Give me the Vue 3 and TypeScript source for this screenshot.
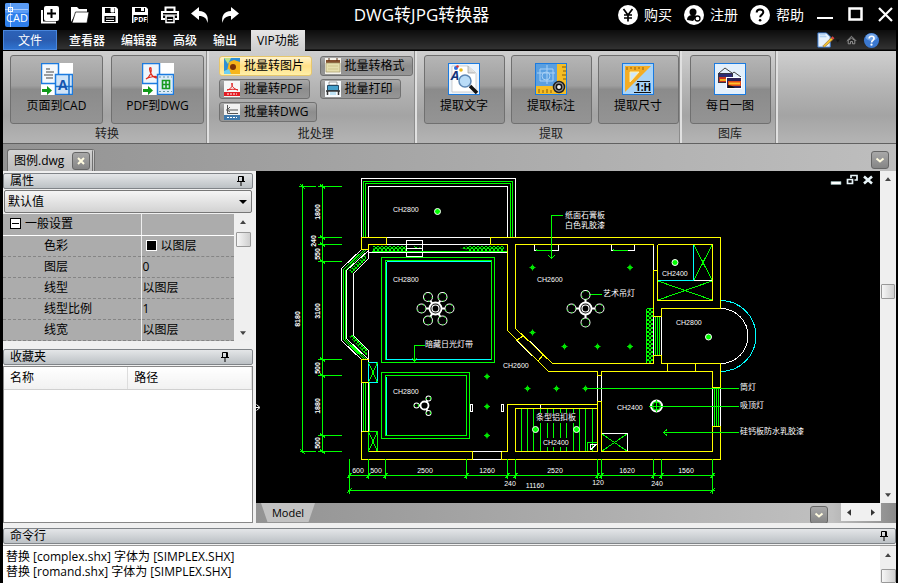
<script setup lang="ts">
import { ref } from 'vue'

type Pt = [number, number]

const tabs = ['查看器', '编辑器', '高级', '输出', 'VIP功能']
const activeTab = ref('VIP功能')
const preset = ref('默认值')

const properties = [
  { name: '色彩', value: '以图层', swatch: true },
  { name: '图层', value: '0', swatch: false },
  { name: '线型', value: '以图层', swatch: false },
  { name: '线型比例', value: '1', swatch: false },
  { name: '线宽', value: '以图层', swatch: false },
]

const log = ['替换 [complex.shx] 字体为 [SIMPLEX.SHX]', '替换 [romand.shx] 字体为 [SIMPLEX.SHX]']

/* Floor plan */
const yellow = [
  'M361.5 249.5V237.5H386.5V244.5H368.5V249.5Z',
  'M490.5 244.5V237.5H720.5V308.5H661.5V316.5H653.5V270.5H657.5V300.5H712.5V244.5H657.5',
  'M657.5 270.5V244.5M653.5 244.5V246M490.5 244.5H507.5V330.5L548.5 371.5H597.5V375.5H601.5V371.5H712.5V387.5H720.5V363.5H661.5V355.5H653.5V363.5H552.5L515.5 328.5V244.5H653.5',
  'M523.5 335.5L516.5 340.5M543.5 354.5L537.5 361.5',
  'M361.5 382.5V359.5H368.5M361.5 382.5H368.5M361.5 431.5V459.5H472.5V451.5H368.5M361.5 431.5H368.5',
  'M501.5 451.5V459.5H720.5V426.5H712.5V451.5H601.5V401.5H597.5V404.5H507.5V451.5H501.5',
  'M515.5 408.5H597.5V451.5H515.5ZM597.5 401.5V408.5M667.5 363.5V371.5M695.5 363.5V371.5',
]
const white = [
  'M361.5 237.5V178.5H515.5V237.5M368.5 237.5V186.5H507.5V237.5',
  'M386.5 237.5H490.5M386.5 244.5H490.5M368.5 252.5H507.5',
  'M406.5 240.5H422.5V256.5H406.5ZM406.5 248.5H422.5',
  'M361.5 249.5L341.5 268.5V340.5L361.5 359.5M368.5 250.5L346.5 270.5V338.5L368.5 359.5',
  'M368.5 249.5V258.5L353.5 273.5V335.5L368.5 350.5V361.5',
  'M524.5 336.5L543.5 354.5M517.5 341.5L537.5 360.5',
  'M534.5 244.5V250.5H558.5V244.5M611.5 244.5V250.5H634.5V244.5',
  'M653.5 246V270.5M657.5 246V270.5M693.5 280.5H712.5',
  'M361.5 382.5V431.5M368.5 382.5V431.5M472.5 451.5H501.5M472.5 459.5H501.5',
  'M516.5 404.5H540.5M516.5 408.5H540.5V404.5M597.5 375.5V401.5M601.5 375.5V401.5',
  'M667.5 363.5H695.5M667.5 371.5H695.5M712.5 387.5V426.5M720.5 387.5V426.5',
  'M470.5 404.5H472.5V411.5H470.5ZM501.5 404.5H503.5V411.5H501.5Z',
  'M601.5 433.5H627.5V451.5M661.5 316.5V355.5M653.5 316.5V355.5',
]
const green = [
  'M363.5 237.5V181.5H512.5V237.5M365.5 237.5V183.5H510.5V237.5',
  'M364.5 249.5L343.5 269.5V339.5L364.5 359.5M366.5 249.5L345.5 270.5V339.5L366.5 359.5',
  'M372 251.5H507M381.5 257.5H494.5V362.5H381.5ZM385.5 260.5H491.5V359.5H385.5Z',
  'M381.5 372.5H469.5V438.5H381.5ZM385.5 375.5H466.5V435.5H385.5Z',
  'M363.5 382.5V431.5M365.5 382.5V431.5M369.5 382.5V431.5',
  'M368.5 431.5H377.5V451.5H368.5ZM368.5 431.5L377.5 451.5M377.5 431.5L368.5 451.5M368.5 362.5L377.5 382.5M377.5 362.5L368.5 382.5',
  'M694 245L712 280M712 245L694 280M658 281L712 300M712 281L658 300',
  'M655.5 316.5V355.5M657.5 316.5V355.5M659.5 316.5V355.5M646.5 308.5H653.5M646.5 308.5V363.5H653.5',
  'M714.5 387.5V426.5M716.5 387.5V426.5M718.5 387.5V426.5M536.5 248.5V250.5H552M613.5 248.5V250.5H628',
  'M602 434L627 451M627 434L602 451M587.5 451.5V442.5H597',
]
const leaders = [
  'M562.5 215.5H551.5V258.5M548.5 255.5L551.5 258.5L554.5 255.5',
  'M585 294.5H602M425 345.5H414.5V361.5M412.5 358.5L414.5 361.5L416.5 358.5',
  'M585 388.5H739M650 406.5H739M663.5 432.5H739M667 429.5L663.5 432.5L667 435.5',
]
const slats = [521.5, 527.5, 533.5, 540.5, 547.5, 553.5, 560.5, 566.5, 573.5, 579.5, 585.5, 592.5]
const xTicks = [349.5, 368.5, 385.5, 466.5, 507.5, 515.5, 597.5, 601.5, 653.5, 661.5, 712.5]
const yTicks = [186.5, 237.5, 244.5, 261.5, 359.5, 375.5, 435.5, 451.5]

const spots: Pt[] = [
  [532.5, 267.5], [630, 267.5], [532.5, 332.5], [564.5, 346.5], [597.5, 346.5], [630, 346.5],
  [527.5, 388.5], [556.5, 388.5], [585.5, 388.5], [487, 376.5], [487, 406.5], [487, 435.5],
]
const lamps: Pt[] = [[437.5, 211.5], [675, 262.5], [708.5, 337], [535.5, 429.5], [576.5, 429.5]]

const chandeliers: { c: Pt; r: number; bulbs: Pt[]; b: number }[] = [
  { c: [435.5, 308.5], r: 6, b: 4, bulbs: [[428, 297], [442.5, 297], [421.5, 308.5], [449.5, 308.5], [428, 320.5], [442.5, 320.5]] },
  { c: [585.5, 308.5], r: 6, b: 4, bulbs: [[585.5, 295], [571.5, 308.5], [599.5, 308.5], [585.5, 322.5]] },
  { c: [424.5, 405.5], r: 4, b: 2, bulbs: [[416.5, 405.5], [428.5, 398.5], [428.5, 413]] },
]

const rooms: { x: number; y: number; t: string }[] = [
  { x: 393, y: 212, t: 'CH2800' },
  { x: 393, y: 282, t: 'CH2800' },
  { x: 537, y: 282, t: 'CH2600' },
  { x: 662, y: 276, t: 'CH2400' },
  { x: 676, y: 325, t: 'CH2800' },
  { x: 393, y: 394, t: 'CH2800' },
  { x: 503, y: 368, t: 'CH2600' },
  { x: 617, y: 410, t: 'CH2400' },
  { x: 543, y: 445, t: 'CH2400' },
]
const notes: { x: number; y: number; lines: string[] }[] = [
  { x: 565, y: 218, lines: ['纸面石膏板', '白色乳胶漆'] },
  { x: 603, y: 296, lines: ['艺术吊灯'] },
  { x: 425, y: 347, lines: ['暗藏日光灯带'] },
  { x: 740, y: 390, lines: ['筒灯'] },
  { x: 740, y: 408, lines: ['吸顶灯'] },
  { x: 740, y: 434, lines: ['硅钙板防水乳胶漆'] },
  { x: 536, y: 420, lines: ['条型铝扣板'] },
]
const xDims: { x: number; y: number; t: string }[] = [
  { x: 358, y: 473, t: '600' },
  { x: 376, y: 473, t: '500' },
  { x: 425, y: 473, t: '2500' },
  { x: 487, y: 473, t: '1260' },
  { x: 555, y: 473, t: '2520' },
  { x: 627, y: 473, t: '1620' },
  { x: 686, y: 473, t: '1560' },
  { x: 510, y: 486, t: '240' },
  { x: 598, y: 485, t: '120' },
  { x: 657, y: 486, t: '240' },
  { x: 535, y: 488, t: '11160' },
]
const yDims: { x: number; y: number; t: string }[] = [
  { x: 320, y: 212, t: '1800' },
  { x: 316, y: 241, t: '240' },
  { x: 320, y: 254, t: '550' },
  { x: 320, y: 311, t: '3100' },
  { x: 300, y: 319, t: '8180' },
  { x: 320, y: 368, t: '500' },
  { x: 320, y: 406, t: '1880' },
  { x: 320, y: 443, t: '500' },
]
</script>

<template>
  <div class="app">
    <header class="titlebar">
      <svg class="logo" viewBox="0 0 24 24">
        <rect width="24" height="24" rx="2" fill="#2f7fec" />
        <rect width="24" height="10" rx="2" fill="#5a9cf5" />
        <path d="M0 6.500H23M5.500 0V24" stroke="#a9ccff" />
        <rect x="3.500" y="4.500" width="4" height="4" fill="none" stroke="#fff" />
        <text x="12" y="19" text-anchor="middle" font-size="11" fill="#fff">CAD</text>
      </svg>
      <nav class="quick">
        <button aria-label="新建">
          <svg viewBox="0 0 18 18"><path d="M1 4v12.500h14" fill="none" stroke="#fff" stroke-width="2" /><rect x="3" y="0" width="15" height="15" rx="2" fill="#fff" /><path d="M10.500 3v9M6 7.500h9" stroke="#000" stroke-width="2" /></svg>
        </button>
        <button aria-label="打开">
          <svg viewBox="0 0 18 18"><path d="M0 16V1h6l2 2h8v4H5z" fill="#fff" /><path d="M4.500 6H18l-2 11H1z" fill="#fff" stroke="#000" stroke-width=".7" /></svg>
        </button>
        <button aria-label="保存">
          <svg viewBox="0 0 18 18"><path d="M1 1h14l2 2v14H1z" fill="#fff" /><path d="M4 2h10v5H4zM3.500 10h11v6h-11z" fill="#000" /><path d="M10 2h3v4h-3zM5 12h8M5 14.500h8" fill="#fff" stroke="#fff" /></svg>
        </button>
        <button aria-label="保存为PDF">
          <svg viewBox="0 0 18 18"><path d="M1 1h14l2 2v14H1z" fill="#fff" /><path d="M4 2h10v4H4zM2.500 9h14v8h-14z" fill="#000" /><path d="M10 2h3v3h-3z" fill="#fff" /><text x="9.500" y="16" text-anchor="middle" font-size="7" font-weight="700" fill="#fff">PDF</text></svg>
        </button>
        <button aria-label="打印">
          <svg viewBox="0 0 18 18"><path d="M4.500 6V1.500h9V6M4 13H1V6h16v7h-3" fill="none" stroke="#fff" stroke-width="2" /><path d="M2 9h14" stroke="#fff" /><path d="M5 10h8v6.500H5z" fill="#000" stroke="#fff" stroke-width="1.500" /><path d="M6.500 13.500h5" stroke="#fff" /></svg>
        </button>
        <button aria-label="撤销">
          <svg viewBox="0 0 18 18"><path d="M0 7.500L8 1v4c7 0 10 5 8.500 12-1-5-3.500-7-8.500-7v4z" fill="#fff" /></svg>
        </button>
        <button aria-label="重做">
          <svg viewBox="0 0 18 18"><path d="M18 7.500L10 1v4C3 5 0 10 1.500 17c1-5 3.500-7 8.500-7v4z" fill="#fff" /></svg>
        </button>
      </nav>
      <h1 class="title">DWG转JPG转换器</h1>
      <nav class="account">
        <button>
          <svg viewBox="0 0 20 20"><circle cx="10" cy="10" r="10" fill="#fff" /><path d="M5.500 4l4.500 6 4.500-6M10 10v6.500M6 10h8M6 13h8" fill="none" stroke="#000" stroke-width="1.700" /></svg>购买
        </button>
        <button>
          <svg viewBox="0 0 20 20"><circle cx="10" cy="10" r="10" fill="#fff" /><circle cx="9" cy="7" r="3.500" fill="#000" /><path d="M3 15c0-4 3-5 6-5 2 0 3 .5 4 1.500L9 16z" fill="#000" /><circle cx="13.500" cy="13.500" r="2.500" fill="#fff" stroke="#000" stroke-width="1.300" /></svg>注册
        </button>
        <button>
          <svg viewBox="0 0 20 20"><circle cx="10" cy="10" r="10" fill="#fff" /><path d="M6.700 7.500C6.700 3.500 13.300 3.500 13.300 7.300c0 2.200-3.200 2.500-3.200 5" fill="none" stroke="#000" stroke-width="2" /><circle cx="10.100" cy="15.200" r="1.300" /></svg>帮助
        </button>
      </nav>
      <div class="window-buttons">
        <button aria-label="最小化"><svg viewBox="0 0 16 16"><path d="M0 11h16" stroke="#fff" stroke-width="2" /></svg></button>
        <button aria-label="最大化"><svg viewBox="0 0 16 16"><rect x="2.500" y="1.500" width="12" height="11" fill="none" stroke="#fff" stroke-width="2.500" /></svg></button>
        <button aria-label="关闭"><svg viewBox="0 0 16 16"><path d="M2 1l13 13M15 1L2 14" stroke="#fff" stroke-width="2.200" /></svg></button>
      </div>
    </header>

    <nav class="tabs">
      <button class="file">文件</button>
      <button v-for="t in tabs" :key="t" class="tab" :class="{ active: t === activeTab }" @click="activeTab = t">{{ t }}</button>
      <div class="tab-tools">
        <button aria-label="样式">
          <svg viewBox="0 0 24 18"><path d="M1 1h9l4 4v11H1z" fill="#e8f2fc" stroke="#3e7fd8" /><path d="M3 3h6M3 5h7" stroke="#9cc5f0" /><path d="M6 15l9-9 2 2-9 8z" fill="#f1c232" stroke="#8a5a20" stroke-width=".6" /><path d="M15 6l1.500-1.500 2 2L17 8z" fill="#d44" /><path d="M20 8h4l-2 3z" fill="#111" /></svg>
        </button>
        <button aria-label="折叠">
          <svg viewBox="0 0 18 18"><path d="M4 9.500l5-5 5 5M5.500 12.500V9L9 6.500 12.500 9v3.500H10V10H8v2.500z" fill="none" stroke="#9a9a9a" /></svg>
        </button>
        <button aria-label="帮助">
          <svg viewBox="0 0 18 18"><circle cx="9" cy="9" r="8" fill="#3b78d0" /><ellipse cx="9" cy="5.500" rx="6" ry="4" fill="#6fa2e6" /><path d="M6.500 7C6.500 3.700 11.700 3.700 11.700 7c0 1.700-2.600 2-2.600 4" fill="none" stroke="#fff" stroke-width="1.800" /><circle cx="9" cy="13.400" r="1.200" fill="#fff" /></svg>
        </button>
      </div>
    </nav>

    <section class="ribbon">
      <div class="group">
        <div class="big-row">
          <button class="big wide">
            <svg viewBox="0 0 32 32"><rect width="32" height="32" fill="#fff" /><rect x=".5" y=".5" width="17" height="20" fill="#f4f8fc" stroke="#1b7be0" stroke-width="1.500" /><path d="M5 6h4M5 9h8M3 12h9M5 15h7" stroke="#444" /><rect x="14.500" y="11.500" width="17" height="20" fill="#cfe4f8" stroke="#1b7be0" stroke-width="1.500" /><path d="M14.500 23.500H32M28 12v20" stroke="#1b6fc8" stroke-width="1.500" /><text x="17" y="27" font-size="14" font-weight="700" fill="#1355b0">A</text><path d="M1 26h5v-3l5 4.500L6 32v-3H1z" fill="#0f9a18" /></svg>
            页面到CAD
          </button>
          <button class="big wide">
            <svg viewBox="0 0 32 32"><rect width="32" height="32" fill="#fff" /><rect x=".5" y=".5" width="17" height="20" fill="#eef5fb" stroke="#1b7be0" stroke-width="1.500" /><path d="M4 16c4-2 6-7 5-11-1-1-2 0-1 3 1 4 3 6 6 7 2 0 1-2-2-1.500C9 14 6 14.500 4 16z" fill="none" stroke="#e02818" stroke-width="1.200" /><rect x="15.500" y="11.500" width="16" height="20" fill="#dcecfa" stroke="#1b7be0" stroke-width="1.500" /><path d="M20.500 17.500h7v8h-7zM24 17.500v8M20.500 21.500h7" fill="none" stroke="#169a20" stroke-width="1.600" /><path d="M17 14h13M17 28.500h13" stroke="#69a" stroke-dasharray="2 2" /><path d="M1 26h5v-3l5 4.500L6 32v-3H1z" fill="#0f9a18" /></svg>
            PDF到DWG
          </button>
        </div>
        <div class="caption">转换</div>
      </div>

      <div class="group batch">
        <div class="small-cols">
          <div class="small-col">
            <button class="small hot">
              <svg viewBox="0 0 16 16"><rect width="16" height="16" fill="#2f8fd4" /><path d="M0 0h7L4 6z" fill="#b8e08a" /><path d="M3 13l2-9 5-2 6 2v12H5z" fill="#f6b51c" /><circle cx="9" cy="9" r="3" fill="#7a3208" /><path d="M0 13l5-2 2 5H0z" fill="#6fd0f0" /></svg>批量转图片
            </button>
            <button class="small">
              <svg viewBox="0 0 16 16"><rect width="16" height="16" fill="#f6f6f6" /><path d="M3 9c4-1 6-4 5-7-1 3 2 6 6 7-3-1-7-1-11 0z" fill="none" stroke="#e02020" /><path d="M0 11h16v4H0z" fill="#e41b23" /><path d="M3 13h10" stroke="#fff" stroke-dasharray="2 1" /></svg>批量转PDF
            </button>
            <button class="small">
              <svg viewBox="0 0 16 16"><rect width="16" height="16" fill="#f2f2f2" /><path d="M3.500 1v8.500H14M2 6h12M6 3l-3 3 3 2" fill="none" stroke="#555" /><path d="M0 11h16v5H0z" fill="#3e78ab" /><path d="M3 13.500h10" stroke="#fff" stroke-dasharray="2 1" /></svg>批量转DWG
            </button>
          </div>
          <div class="small-col">
            <button class="small">
              <svg viewBox="0 0 16 16"><rect width="16" height="16" fill="#f4f2ea" /><path d="M1 2h14v3H1z" fill="#84502e" /><path d="M1 5h14v9H1z" fill="#e6dfae" stroke="#a59a68" stroke-width=".7" /><path d="M4 0v3M12 0v3" stroke="#5a3018" /><path d="M3 8h10M3 11h10" stroke="#cfc58c" /></svg>批量转格式
            </button>
            <button class="small">
              <svg viewBox="0 0 16 16"><rect width="16" height="16" fill="#f7fafc" /><path d="M4 1h8v3H4z" fill="#fff" stroke="#777" stroke-width=".7" /><path d="M2.500 4.500h11v5h-11z" fill="#45a0cc" stroke="#234a66" /><path d="M1 10h14M2.500 10v4M13.500 10v4" stroke="#333" stroke-width="1.500" /><path d="M5 11h6v3H5z" fill="#bfe3f5" /></svg>批量打印
            </button>
          </div>
        </div>
        <div class="caption">批处理</div>
      </div>

      <div class="group extract">
        <div class="big-row">
          <button class="big">
            <svg viewBox="0 0 32 32"><rect x=".5" y=".5" width="31" height="31" fill="#eaf3fc" stroke="#1b7be0" /><path d="M4 3h16l8 7v19H4z" fill="#fff" stroke="#bbb" stroke-width=".7" /><path d="M20 3v7h7" fill="#ddd" stroke="#999" stroke-width=".7" /><text x="3" y="17" font-size="13" font-weight="700" font-style="italic" fill="#12337c">A</text><circle cx="8" cy="5" r="2" fill="#2d6fe0" /><circle cx="13" cy="7" r="1.800" fill="#e8b818" /><circle cx="9.500" cy="3.500" r="1.300" fill="#d33" /><circle cx="17" cy="18" r="6" fill="#b9dcf8" stroke="#5d87b5" stroke-width="1.500" /><path d="M22 23l7 7" stroke="#111" stroke-width="3.500" /></svg>
            提取文字
          </button>
          <button class="big">
            <svg viewBox="0 0 32 32"><rect x=".5" y=".5" width="31" height="31" fill="#5a9fe0" stroke="#1b7be0" /><path d="M22 1h9v30H1v-8h21z" fill="#f5bd25" /><path d="M27 4h4M28 8h3M27 12h4M28 16h3M4 26v4M8 27v3M12 26v4M16 27v3" stroke="#865c08" /><path d="M5 6h13v12H5zM2 10h18M12 2v19" fill="none" stroke="#a8d0f5" /><circle cx="11" cy="13" r="4" fill="none" stroke="#a8d0f5" /><circle cx="24" cy="24" r="5.500" fill="#999" stroke="#222" stroke-width="1.500" /><circle cx="24" cy="24" r="2.700" fill="#eee" stroke="#111" stroke-width="1.500" /></svg>
            提取标注
          </button>
          <button class="big">
            <svg viewBox="0 0 32 32"><rect x=".5" y=".5" width="31" height="31" fill="#a8d3f7" stroke="#1b7be0" /><path d="M3 3h26L3 29z" fill="#f4ad24" /><path d="M8 9h9l-9 10z" fill="#cfe8fb" stroke="#fff3b0" /><path d="M5 4v3M9 4v2M13 4v3M17 4v2M21 4v3" stroke="#93600c" /><path d="M15 18.500h13M12 29.500h17" stroke="#111" /><text x="13" y="28" font-size="10" font-weight="700" fill="#000">1:H</text></svg>
            提取尺寸
          </button>
        </div>
        <div class="caption">提取</div>
      </div>

      <div class="group gallery">
        <div class="big-row">
          <button class="big">
            <svg viewBox="0 0 32 32"><rect x=".5" y=".5" width="31" height="31" fill="#e3f0fc" stroke="#1b7be0" /><path d="M5 10l6-5 7 5M14 14l6-5 7 5" fill="none" stroke="#444" /><rect x="4.500" y="10.500" width="14" height="9" fill="#2c2c72" stroke="#334" /><path d="M5 14h13v5H5z" fill="#c9341a" /><path d="M6 17h10" stroke="#f0b020" stroke-width="2" /><rect x="12.500" y="14.500" width="15" height="11" fill="#2b2256" stroke="#fff" /><path d="M14 18h13v5H14z" fill="#e04a14" /><path d="M15 20.500h11" stroke="#ffc12a" stroke-width="2" /><path d="M14 25v-3l4 1 3 2z" fill="#111" /></svg>
            每日一图
          </button>
        </div>
        <div class="caption">图库</div>
      </div>
    </section>

    <div class="doc-strip">
      <div class="doc-tab">
        <span>图例.dwg</span>
        <button class="chip" aria-label="关闭图例.dwg"><svg viewBox="0 0 16 16"><path d="M5 5l6 6M11 5l-6 6" stroke="#fffbe0" stroke-width="2" /></svg></button>
      </div>
      <button class="chip" aria-label="文档列表"><svg viewBox="0 0 16 16"><path d="M4.500 6.500L8 9.500l3.500-3" fill="none" stroke="#fffbe0" stroke-width="2" /></svg></button>
    </div>

    <main class="work">
      <aside class="side">
        <section class="panel">
          <header class="panel-head"><h2>属性</h2><button aria-label="固定属性"><svg viewBox="0 0 10 12"><path d="M2.500 6V1.500h5V6M6.500 2v4M1 6.500h8M5 7v4" fill="none" stroke="#000" /></svg></button></header>
          <label class="combo">
            <select v-model="preset" aria-label="预设"><option>默认值</option></select>
            <svg viewBox="0 0 10 6"><path d="M1 1h8L5 5z" /></svg>
          </label>
          <div class="prop-area">
            <table class="props">
              <thead><tr><th scope="col"><svg viewBox="0 0 11 11"><rect x=".5" y=".5" width="10" height="10" fill="#fff" stroke="#000" /><path d="M2 5.500h7" stroke="#000" /></svg>一般设置</th><td></td></tr></thead>
              <tbody>
                <tr v-for="p in properties" :key="p.name"><th scope="row">{{ p.name }}</th><td><i v-if="p.swatch" class="swatch"></i>{{ p.value }}</td></tr>
              </tbody>
            </table>
            <div class="vbar">
              <svg viewBox="0 0 8 5"><path d="M0 5h8L4 0z" /></svg>
              <span class="thumb"></span><span class="grow"></span>
              <svg viewBox="0 0 8 5"><path d="M0 0h8L4 5z" /></svg>
            </div>
          </div>
        </section>
        <section class="panel fav">
          <header class="panel-head"><h2>收藏夹</h2><button class="inset" aria-label="固定收藏夹"><svg viewBox="0 0 10 12"><path d="M2.500 6V1.500h5V6M6.500 2v4M1 6.500h8M5 7v4" fill="none" stroke="#000" /></svg></button></header>
          <div class="fav-body">
            <table><thead><tr><th scope="col">名称</th><th scope="col">路径</th></tr></thead></table>
          </div>
        </section>
      </aside>

      <section class="viewer">
        <div class="view-row">
          <div class="canvas">
            <svg class="plan" viewBox="256 171 624 332" role="img" aria-label="图例.dwg">
              <defs>
                <pattern id="hatch" width="4" height="4" patternUnits="userSpaceOnUse">
                  <path d="M0 0l4 4M4 0L0 4M2 0v1" stroke="#00ff00" fill="none" />
                </pattern>
              </defs>
              <g fill="url(#hatch)">
                <path d="M373 246h34v5h-34zM422 248l-8-2v3zM469 246h35v5h-35zM460 248l9-2v4z" />
                <path d="M349 271l17-17v6l-14 13zM349 336l4-1 14 14v7z" />
                <path d="M647 309h6v54h-6z" />
              </g>
              <g class="lines">
                <path v-for="x in slats" :key="x" :d="`M${x} 409V451`" stroke="#00ff00" />
                <path d="M693.500 244.500V280.500H657.500M386.500 261.500V358.500M386.500 261.500H491M386.500 376.500V435M368.500 362.500H377.500V382.500H368.500ZM368.500 382V451" stroke="#00ffff" />
                <path v-for="d in white" :key="d" :d="d" stroke="#ffffff" />
                <path v-for="d in green" :key="d" :d="d" stroke="#00ff00" />
                <path v-for="d in yellow" :key="d" :d="d" stroke="#ffff00" />
                <path d="M386 359.500H491" stroke="#00ffff" />
                <path d="M720.500 300.500A35.500 35.500 0 0 1 720.500 371.500" stroke="#00ffff" />
                <path d="M720.500 308.500A27.500 27.500 0 0 1 720.500 363.500" stroke="#ffffff" />
                <path v-for="d in leaders" :key="d" :d="d" stroke="#00ff00" />
                <path d="M302.500 184V453M322.500 184V453M299 186.500H316M300 451.500H316M348 475.500H715M348 490.500H715M349.500 459V494M712.500 459V494" stroke="#00ff00" />
                <path v-for="y in yTicks" :key="'y' + y" :d="`M318 ${y}H342M320 ${y - 2}L325 ${y + 2}`" stroke="#00ff00" />
                <path v-for="x in xTicks" :key="'x' + x" :d="`M${x} 459V479M${x - 2} 478L${x + 2} 473`" stroke="#00ff00" />
                <path d="M300 184L305 189M300 449L305 454M347 493L352 488M710 493L715 488" stroke="#00ff00" />
                <path d="M590.500 450V444.500H596L590.500 450" stroke="#ffffff" />
              </g>
              <path d="M536 413h39v10h-39zM542 438h27v9h-27z" fill="#000" />

              <g v-for="(f, i) in chandeliers" :key="'c' + i" fill="#000" stroke="#fff">
                <path v-for="(b, j) in f.bulbs" :key="j" :d="`M${f.c[0]} ${f.c[1]}L${b[0]} ${b[1]}`" stroke-width="2" />
                <g v-for="(b, j) in f.bulbs" :key="'b' + j">
                  <circle :cx="b[0]" :cy="b[1]" :r="f.b" stroke-width="2" />
                  <circle :cx="b[0]" :cy="b[1]" :r="f.b" stroke="#00ff00" stroke-width="1.200" stroke-dasharray="1 4" />
                </g>
                <circle :cx="f.c[0]" :cy="f.c[1]" :r="f.r" stroke-width="1.800" />
                <circle v-if="f.r > 4" :cx="f.c[0]" :cy="f.c[1]" r="3.500" stroke-width="1.200" />
              </g>
              <circle v-for="(p, i) in lamps" :key="'l' + i" :cx="p[0]" :cy="p[1]" r="3" fill="#00ff00" stroke="#fff" />
              <g v-for="(p, i) in spots" :key="'s' + i">
                <circle :cx="p[0]" :cy="p[1]" r="2" fill="#00ff00" />
                <path :d="`M${p[0] - 3} ${p[1]}h6M${p[0]} ${p[1] - 3}v6`" stroke="#00e000" />
              </g>
              <circle cx="656.500" cy="406" r="5.500" fill="#000" stroke="#fff" stroke-width="2" />
              <circle cx="656.500" cy="406" r="4" fill="none" stroke="#00ff00" />
              <path d="M649 406.500h15M656.500 400v12" stroke="#00ff00" />
              <path d="M256.500 404.500l3.500 3-3.500 3M256 407.500h3" fill="none" stroke="#fff" />

              <g class="label">
                <text v-for="(r, i) in rooms" :key="'r' + i" :x="r.x" :y="r.y">{{ r.t }}</text>
              </g>
              <g class="note">
                <text v-for="n in notes" :key="n.lines[0]" :y="n.y"><tspan v-for="(l, i) in n.lines" :key="l" :x="n.x" :dy="i * 10">{{ l }}</tspan></text>
              </g>
              <g class="dim">
                <text v-for="(d, i) in xDims" :key="'dx' + i" :x="d.x" :y="d.y">{{ d.t }}</text>
                <text v-for="(d, i) in yDims" :key="'dy' + i" class="upright" :x="d.x" :y="d.y" :transform="`rotate(-90 ${d.x} ${d.y})`">{{ d.t }}</text>
              </g>
            </svg>
            <div class="mdi">
              <button aria-label="最小化图纸"><svg viewBox="0 0 12 12"><path d="M1 7.500h10v3H1z" fill="#fff" stroke="#8aa" stroke-width=".6" /></svg></button>
              <button aria-label="还原图纸"><svg viewBox="0 0 12 12"><path d="M5 4V1.500h6V6H8.500M1.500 5.500h5v4h-5z" fill="none" stroke="#e8f4f8" stroke-width="1.700" /></svg></button>
              <button aria-label="关闭图纸"><svg viewBox="0 0 12 12"><path d="M2 2.500l8 7M10 2.500l-8 7" stroke="#e8f4f8" stroke-width="2.600" /></svg></button>
            </div>
          </div>
          <div class="vbar main-bar">
            <svg viewBox="0 0 8 5"><path d="M0 5h8L4 0z" /></svg>
            <span class="before"></span><span class="thumb"></span><span class="after"></span>
            <svg viewBox="0 0 8 5"><path d="M0 0h8L4 5z" /></svg>
          </div>
        </div>
        <footer class="layout-row">
          <button class="model">Model</button>
          <span class="grow"></span>
          <button class="chip" aria-label="布局列表"><svg viewBox="0 0 16 16"><path d="M4.500 6.500L8 9.500l3.500-3" fill="none" stroke="#fffbe0" stroke-width="2" /></svg></button>
          <div class="hbar">
            <svg viewBox="0 0 5 8"><path d="M5 0v8L0 4z" /></svg>
            <svg viewBox="0 0 5 8"><path d="M0 0v8l5-4z" /></svg>
          </div>
        </footer>
      </section>
    </main>

    <section class="command">
      <header class="panel-head"><h2>命令行</h2><button aria-label="固定命令行"><svg viewBox="0 0 10 12"><path d="M2.500 6V1.500h5V6M6.500 2v4M1 6.500h8M5 7v4" fill="none" stroke="#000" /></svg></button></header>
      <div class="command-body">
        <pre class="log" role="log">{{ log.join('\n') }}</pre>
        <div class="vbar">
          <svg viewBox="0 0 8 5"><path d="M0 5h8L4 0z" /></svg>
          <span class="thumb tall"></span>
        </div>
      </div>
    </section>
  </div>
</template>

<style>
html,
body,
#app {
  height: 100%;
  margin: 0;
}
body {
  overflow: hidden;
  background: #000;
}
</style>

<style scoped>
.app {
  display: flex;
  flex-direction: column;
  height: 100%;
  box-sizing: border-box;
  padding: 0 2px 0 3px;
  background: #000;
  color: #000;
  font: 12px/16px "Open Sans", "Noto Sans CJK SC", sans-serif;
  overflow: hidden;
}
button {
  padding: 0;
  border: 0;
  background: none;
  font: inherit;
  color: inherit;
}
svg {
  display: block;
  flex: none;
}
h1,
h2 {
  margin: 0;
  font-weight: 400;
}
.grow {
  flex: 1;
}

/* title bar */
.titlebar {
  display: flex;
  align-items: center;
  flex: none;
  height: 30px;
  padding: 0 3px 0 2px;
  color: #fff;
  white-space: nowrap;
}
.logo {
  width: 24px;
  height: 24px;
}
.quick {
  display: flex;
  gap: 12px;
  margin-left: 12px;
}
.quick svg {
  width: 18px;
  height: 18px;
}
.title {
  flex: 1;
  padding-right: 14px;
  text-align: center;
  font-size: 17px;
  line-height: 30px;
}
.account {
  display: flex;
  gap: 12px;
  font-size: 14px;
  line-height: 20px;
}
.account button {
  display: flex;
  align-items: center;
  gap: 6px;
}
.account svg {
  width: 20px;
  height: 20px;
}
.window-buttons {
  display: flex;
  gap: 14px;
  margin-left: 13px;
}
.window-buttons svg {
  width: 16px;
  height: 16px;
}

/* tab row */
.tabs {
  display: flex;
  flex: none;
  height: 21px;
  background: linear-gradient(#0c0c0c, #323232 19px, #000 20px);
  color: #fff;
  line-height: 19px;
}
.file {
  width: 54px;
  margin-right: 4px;
  margin-bottom: 1px;
  background: linear-gradient(#2c62b8, #2a5cb0 50%, #2f73cf);
  border: 1px solid #4a86dc;
  line-height: 17px;
}
.tab {
  padding: 0 8px;
  font-weight: 500;
}
.tab.active {
  margin-left: 6px;
  padding: 0 6px;
  background: linear-gradient(#e6e6e6, #cdcdcd);
  color: #000;
  font-weight: 400;
}
.tab-tools {
  display: flex;
  gap: 3px;
  margin-left: auto;
  padding-right: 16px;
}
.tab-tools svg {
  height: 17px;
}

/* ribbon */
.ribbon {
  display: flex;
  flex: none;
  height: 92px;
  border-bottom: 1px solid #616161;
  background: linear-gradient(#cfcfcf, #b4b4b4 40%, #a4a4a4 70%, #b4b4b4);
}
.group {
  display: flex;
  flex-direction: column;
  justify-content: space-between;
  box-sizing: border-box;
  padding: 4px 3px 0 7px;
  border-right: 2px solid #e0e0e0;
  box-shadow: -1px 0 0 #8c8c8c inset;
}
.caption {
  text-align: center;
  line-height: 18px;
  color: #222;
}
.big-row {
  display: flex;
  gap: 6px;
}
.big {
  display: flex;
  flex-direction: column;
  align-items: center;
  gap: 3px;
  box-sizing: border-box;
  width: 81px;
  height: 69px;
  padding-top: 7px;
  border: 1px solid #707070;
  border-radius: 3px;
  background: linear-gradient(#b5b5b5, #9f9f9f 44%, #8b8b8b 50%, #949494);
}
.big.wide {
  width: 93px;
}
.group:first-child .big-row {
  gap: 8px;
}
.big svg {
  width: 32px;
  height: 32px;
}
.batch {
  padding: 5px 2px 0 10px;
}
.small-cols {
  display: flex;
  gap: 3px;
}
.small-col {
  display: flex;
  flex-direction: column;
  align-items: flex-start;
  gap: 3px;
}
.small {
  display: flex;
  align-items: center;
  gap: 4px;
  box-sizing: border-box;
  height: 20px;
  padding: 0 7px 0 4px;
  border: 1px solid #717171;
  border-radius: 3px;
  background: linear-gradient(#a9a9a9, #8d8d8d 50%, #969696);
  white-space: nowrap;
}
.small svg {
  width: 16px;
  height: 16px;
}
.small.hot {
  border-color: #e6c66c;
  background: linear-gradient(#fff3cc, #ffdf87 50%, #fff0a8);
}
.extract {
  padding: 4px 1px 0 7px;
}
.gallery {
  padding: 4px 5px 0 8px;
}

/* document strip */
.doc-strip {
  display: flex;
  flex: none;
  align-items: center;
  justify-content: space-between;
  height: 27px;
  padding: 0 7px 0 4px;
  background: linear-gradient(90deg, #939393, #bebebe);
}
.doc-tab {
  display: flex;
  align-items: center;
  align-self: flex-end;
  gap: 8px;
  height: 21px;
  padding: 0 2px 0 6px;
  border: 1px solid #6d6d6d;
  border-right: 3px double #707070;
  border-bottom: 0;
  border-radius: 3px 3px 0 0;
  background: linear-gradient(#d2d2d2, #bcbcbc);
}
.chip {
  box-sizing: border-box;
  width: 18px;
  height: 18px;
  border: 1px solid #666;
  border-radius: 3px;
  background: linear-gradient(#a8a8a8, #858585);
}
.doc-strip > .chip {
  margin-top: 5px;
}

/* work area */
.work {
  display: flex;
  flex: 1;
  min-height: 0;
  background: #f0f0f0;
}
.side {
  display: flex;
  flex-direction: column;
  gap: 8px;
  flex: none;
  width: 250px;
  padding: 2px 3px 0 0;
}
.panel-head {
  display: flex;
  align-items: center;
  justify-content: space-between;
  box-sizing: border-box;
  height: 16px;
  padding: 0 6px;
  border: 1px solid #808488;
  border-radius: 2px;
  background: linear-gradient(#e4e6e8, #bcc1c5);
}
.panel-head h2 {
  font-size: 12px;
  line-height: 14px;
}
.panel-head svg {
  width: 10px;
  height: 12px;
}
.panel-head .inset {
  margin-right: 16px;
}
.combo {
  display: flex;
  align-items: center;
  height: 21px;
  margin: 1px 1px 0;
  padding-right: 3px;
  border: 1px solid #777;
  border-radius: 2px;
  background: linear-gradient(#f5f5f5, #d2d2d2);
}
.combo select {
  flex: 1;
  appearance: none;
  padding: 0 3px;
  border: 0;
  background: none;
  font: inherit;
  color: inherit;
}
.combo svg {
  width: 10px;
  height: 6px;
}
.prop-area {
  display: flex;
  margin-top: 1px;
}
table {
  border-collapse: collapse;
  table-layout: fixed;
}
.props {
  flex: 1;
  background: #acacac;
}
.props th,
.props td {
  box-sizing: border-box;
  height: 21px;
  padding: 0 0 0 1px;
  border-bottom: 1px dashed #858585;
  text-align: left;
  font-weight: 400;
  line-height: 20px;
}
.props th {
  width: 138px;
  border-right: 1px solid #eee;
}
.props tbody th {
  padding-left: 41px;
}
.props thead th,
.props thead td {
  border-bottom: 1px solid #fff;
}
.props thead th {
  padding-left: 7px;
}
.props svg {
  display: inline-block;
  width: 11px;
  height: 11px;
  margin-right: 4px;
  vertical-align: -1px;
}
.swatch {
  display: inline-block;
  width: 9px;
  height: 9px;
  margin: 0 4px 0 3px;
  border: 1px solid #fff;
  background: #000;
  vertical-align: -1px;
}
.vbar {
  display: flex;
  flex-direction: column;
  align-items: center;
  box-sizing: border-box;
  width: 16px;
  padding: 6px 0;
  background: #efefef;
}
.vbar svg {
  width: 6px;
  height: 4px;
  fill: #444;
}
.thumb {
  box-sizing: border-box;
  width: 15px;
  height: 15px;
  border: 1px solid #999;
  border-radius: 1px;
  background: linear-gradient(90deg, #f6f6f6, #cfcfcf);
}
.prop-area .vbar {
  margin: 0 2px 0 1px;
}
.prop-area .thumb {
  margin-top: 8px;
}
.fav {
  display: flex;
  flex: 1;
  flex-direction: column;
}
.fav-body {
  flex: 1;
  margin-top: 1px;
  border: 1px solid #888;
  background: #fff;
}
.fav-body table {
  width: 100%;
}
.fav-body th {
  height: 22px;
  padding: 0 6px;
  border-right: 1px solid #ddd;
  border-bottom: 1px solid #d0d0d0;
  background: linear-gradient(#fff, #f1f1f1);
  text-align: left;
  font-weight: 400;
}
.viewer {
  display: flex;
  flex: 1;
  flex-direction: column;
  min-width: 0;
}
.view-row {
  display: flex;
  flex: 1;
  min-height: 0;
}
.canvas {
  position: relative;
  flex: 1;
  min-width: 0;
  background: #000;
}
.plan {
  width: 100%;
  height: 100%;
}
.lines {
  fill: none;
  stroke-width: 1;
  shape-rendering: crispEdges;
}
.label,
.dim {
  fill: #fff;
  font: 7px "Liberation Sans", sans-serif;
}
.dim {
  text-anchor: middle;
}
.upright {
  font-weight: 700;
}
.note {
  fill: #fff;
  font: 8px "Noto Sans CJK SC", sans-serif;
}
.mdi {
  position: absolute;
  top: 3px;
  right: 6px;
  display: flex;
  gap: 4px;
}
.mdi svg {
  width: 12px;
  height: 12px;
}
.main-bar .thumb {
  width: 14px;
}
.before {
  flex: 102;
}
.after {
  flex: 193;
}
.layout-row {
  display: flex;
  flex: none;
  align-items: center;
  height: 20px;
  background: linear-gradient(90deg, #939393, #c0c0c0 90%, #8a8a8a);
}
.model {
  width: 54px;
  height: 19px;
  margin-left: 5px;
  align-self: flex-start;
  background: #c2c2c2;
  font-size: 11px;
  clip-path: polygon(0 0, 100% 0, 88% 100%, 12% 100%);
}
.layout-row .chip {
  margin-top: 3px;
}
.hbar {
  display: flex;
  align-items: center;
  align-self: flex-start;
  justify-content: space-between;
  box-sizing: border-box;
  width: 40px;
  height: 18px;
  margin: 0 15px 0 13px;
  padding: 0 6px;
  background: #f0f0f0;
}
.hbar svg {
  width: 4px;
  height: 7px;
  fill: #333;
}

/* command line */
.command {
  flex: none;
  padding-top: 5px;
  background: #f0f0f0;
}
.command-body {
  display: flex;
  height: 38px;
  margin-top: 1px;
  box-sizing: border-box;
  border-top: 1px solid #999;
  background: #fff;
}
.log {
  flex: 1;
  margin: 0;
  padding: 3px 3px 0;
  font: inherit;
  line-height: 15px;
}
.command-body .vbar {
  padding: 7px 0 0;
}
.thumb.tall {
  height: 20px;
  margin-top: 12px;
}
</style>
